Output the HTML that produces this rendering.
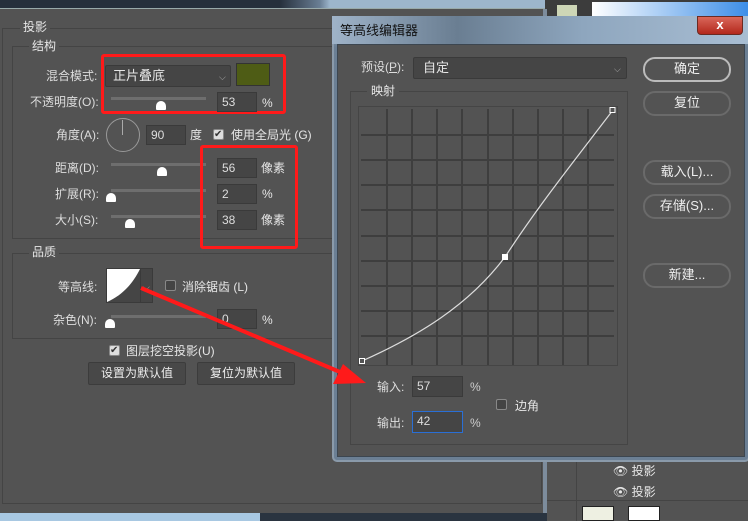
<!DOCTYPE html>
<html><head><meta charset="utf-8"><style>
*{margin:0;padding:0;box-sizing:border-box}
body{width:748px;height:521px;overflow:hidden;background:#535353;position:relative;font-family:"Liberation Sans","Noto Sans CJK SC",sans-serif;font-size:12px;color:#e6e6e6}
.a{position:absolute}
.t{position:absolute;white-space:nowrap;line-height:14px}
.inp{position:absolute;background:#454545;border:1px solid #3a3a3a;color:#ddd;padding-left:4px;line-height:18px;font-size:12px}
.trk{position:absolute;height:3px;background:#6e6e6e}
.th{position:absolute;width:10px;height:9px;background:#fff;border-radius:5px 5px 1px 1px}
.grp{position:absolute;border:1px solid #444}
.btn{position:absolute;border:2px solid #6a6a6a;border-radius:12px;text-align:center;color:#eee;font-size:13px;line-height:20px}
.sbtn{position:absolute;background:#484848;border:1px solid #3c3c3c;border-radius:2px;text-align:center;line-height:20px;color:#eee}
.cb{position:absolute;width:11px;height:11px;border:1px solid #888;border-radius:2px;background:#444}
.red{position:absolute;border:3px solid #ff1a1a;border-radius:3px}
</style></head><body>
<div class="a" style="left:0;top:0;width:748px;height:8px;background:linear-gradient(90deg,#26303c 0,#26303c 280px,#6a7f95 320px,#9db6cc 330px)"></div>
<div class="a" style="left:0;top:8px;width:748px;height:1px;background:#9aa"></div>
<div class="a" style="left:545px;top:0;width:203px;height:16px;background:#3c3c3c"></div>
<div class="a" style="left:557px;top:5px;width:20px;height:11px;background:#cdd6b6"></div>
<div class="a" style="left:592px;top:2px;width:156px;height:14px;background:linear-gradient(90deg,#fff,#3d8ee8)"></div>
<div class="a" style="left:543px;top:9px;width:4px;height:505px;background:#7d8c9c"></div>
<div class="a" style="left:0;top:513px;width:260px;height:8px;background:#a8c8e2"></div>
<div class="a" style="left:260px;top:513px;width:290px;height:8px;background:#2a3440"></div>

<div class="grp" style="left:2px;top:28px;width:540px;height:476px"></div>
<div class="t" style="left:20px;top:20px;background:#535353;padding:0 3px">投影</div>
<div class="grp" style="left:12px;top:46px;width:530px;height:193px"></div>
<div class="t" style="left:29px;top:39px;background:#535353;padding:0 3px">结构</div>

<div class="t" style="left:46px;top:69px;color:#ddd">混合模式:</div>
<div class="a" style="left:105px;top:65px;width:126px;height:22px;background:#454545;border:1px solid #3a3a3a;border-radius:2px"></div>
<div class="t" style="left:113px;top:69px;font-size:13px">正片叠底</div>
<div class="t" style="left:219px;top:70px;color:#aaa;font-size:9px">⌵</div>
<div class="a" style="left:236px;top:63px;width:34px;height:23px;background:#4e5c15;border:1px solid #333"></div>
<div class="red" style="left:101px;top:54px;width:185px;height:60px"></div>

<div class="t" style="left:30px;top:95px;color:#ddd">不透明度(O):</div>
<div class="trk" style="left:111px;top:97px;width:95px"></div><div class="th" style="left:156px;top:101px"></div>
<div class="inp" style="left:217px;top:92px;width:40px;height:20px">53</div><div class="t" style="left:262px;top:96px">%</div>

<div class="t" style="left:56px;top:128px;color:#ddd">角度(A):</div>
<div class="a" style="left:106px;top:118px;width:34px;height:34px;border:1px solid #999;border-radius:50%"></div>
<div class="a" style="left:122px;top:120px;width:1px;height:15px;background:#aaa"></div>
<div class="inp" style="left:146px;top:125px;width:40px;height:20px">90</div><div class="t" style="left:190px;top:128px">度</div>
<div class="cb" style="left:213px;top:129px;background:#ddd"></div><div class="t" style="left:214px;top:128px;color:#333;font-size:10px">✔</div>
<div class="t" style="left:231px;top:128px">使用全局光 (G)</div>

<div class="t" style="left:55px;top:161px;color:#ddd">距离(D):</div>
<div class="trk" style="left:111px;top:163px;width:95px"></div><div class="th" style="left:157px;top:167px"></div>
<div class="inp" style="left:217px;top:158px;width:40px;height:20px">56</div><div class="t" style="left:261px;top:161px">像素</div>
<div class="t" style="left:55px;top:187px;color:#ddd">扩展(R):</div>
<div class="trk" style="left:111px;top:189px;width:95px"></div><div class="th" style="left:106px;top:193px"></div>
<div class="inp" style="left:217px;top:184px;width:40px;height:20px">2</div><div class="t" style="left:262px;top:187px">%</div>
<div class="t" style="left:55px;top:213px;color:#ddd">大小(S):</div>
<div class="trk" style="left:111px;top:215px;width:95px"></div><div class="th" style="left:125px;top:219px"></div>
<div class="inp" style="left:217px;top:210px;width:40px;height:20px">38</div><div class="t" style="left:261px;top:213px">像素</div>
<div class="red" style="left:200px;top:145px;width:98px;height:104px"></div>

<div class="grp" style="left:12px;top:253px;width:530px;height:86px"></div>
<div class="t" style="left:29px;top:245px;background:#535353;padding:0 3px">品质</div>
<div class="t" style="left:58px;top:280px;color:#ddd">等高线:</div>
<div class="a" style="left:106px;top:268px;width:47px;height:35px;border:1px solid #3a3a3a;background:#454545"></div>
<svg class="a" style="left:107px;top:269px" width="33" height="33"><path d="M0 0H33C26 14 16 26 0 33Z" fill="#fff"/></svg>
<div class="a" style="left:140px;top:269px;width:1px;height:33px;background:#3a3a3a"></div>
<div class="t" style="left:143px;top:280px;color:#aaa;font-size:9px">⌵</div>
<div class="cb" style="left:165px;top:280px"></div>
<div class="t" style="left:182px;top:280px">消除锯齿 (L)</div>
<div class="t" style="left:53px;top:313px;color:#ddd">杂色(N):</div>
<div class="trk" style="left:111px;top:315px;width:95px"></div><div class="th" style="left:105px;top:319px"></div>
<div class="inp" style="left:217px;top:309px;width:40px;height:20px">0</div><div class="t" style="left:262px;top:313px">%</div>
<div class="cb" style="left:109px;top:345px;background:#ddd"></div><div class="t" style="left:110px;top:344px;color:#333;font-size:10px">✔</div>
<div class="t" style="left:126px;top:344px">图层挖空投影(U)</div>
<div class="sbtn" style="left:88px;top:362px;width:98px;height:23px">设置为默认值</div>
<div class="sbtn" style="left:197px;top:362px;width:98px;height:23px">复位为默认值</div>

<div class="a" style="left:547px;top:462px;width:201px;height:59px;background:#535353"></div>
<div class="a" style="left:576px;top:462px;width:1px;height:59px;background:#444"></div>
<div class="a" style="left:547px;top:500px;width:201px;height:1px;background:#444"></div>
<div class="t" style="left:613px;top:464px">👁︎ 投影</div>
<div class="t" style="left:613px;top:485px">👁︎ 投影</div>
<div class="a" style="left:582px;top:506px;width:32px;height:15px;background:#eef0e2;border:1px solid #222"></div>
<div class="a" style="left:628px;top:506px;width:32px;height:15px;background:#fff;border:1px solid #222"></div>

<div class="a" style="left:332px;top:16px;width:418px;height:446px;border:2px solid #8a9aaa;border-radius:5px;background:linear-gradient(180deg,#8aa0b8 0,#6b7f94 30px);"></div>
<div class="a" style="left:332px;top:16px;width:418px;height:28px;background:linear-gradient(90deg,#9fb3c8,#6a7e92 30%,#8ea6be 60%,#a9bed3)"></div>
<div class="t" style="left:340px;top:24px;color:#111;font-size:13px">等高线编辑器</div>
<div class="a" style="left:697px;top:16px;width:46px;height:19px;background:linear-gradient(#d9675a,#b3281c);border:1px solid #6b2a22;border-radius:0 0 4px 4px;color:#fff;text-align:center;font-weight:bold;font-size:13px;line-height:16px">x</div>
<div class="a" style="left:337px;top:44px;width:408px;height:413px;background:#535353;border:1px solid #3c4650"></div>

<div class="t" style="left:361px;top:60px;color:#ddd">预设(<u>P</u>):</div>
<div class="a" style="left:413px;top:57px;width:214px;height:22px;background:#454545;border:1px solid #3a3a3a;border-radius:2px"></div>
<div class="t" style="left:423px;top:61px;font-size:13px">自定</div>
<div class="t" style="left:614px;top:62px;color:#aaa;font-size:9px">⌵</div>
<div class="btn" style="left:643px;top:57px;width:88px;height:25px;border-color:#bbb">确定</div>
<div class="btn" style="left:643px;top:91px;width:88px;height:25px">复位</div>
<div class="btn" style="left:643px;top:160px;width:88px;height:25px">载入(L)...</div>
<div class="btn" style="left:643px;top:194px;width:88px;height:25px">存储(S)...</div>
<div class="btn" style="left:643px;top:263px;width:88px;height:25px">新建...</div>

<div class="grp" style="left:350px;top:91px;width:278px;height:354px;border-color:#454545"></div>
<div class="t" style="left:367px;top:84px;background:#535353;padding:0 4px">映射</div>
<svg class="a" style="left:358px;top:106px" width="261" height="261">
<rect x="0.5" y="0.5" width="259" height="259" fill="#535353" stroke="#454545"/>
<g stroke="#3e3e3e" stroke-width="2">
<path d="M29 3V259M54 3V259M79 3V259M104 3V259M130 3V259M155 3V259M180 3V259M205 3V259M230 3V259"/>
<path d="M3 29H256M3 54H256M3 79H256M3 104H256M3 130H256M3 155H256M3 180H256M3 205H256M3 230H256"/>
</g>
<path d="M4 255C60 230 110 200 147 151C180 100 220 50 255 4" fill="none" stroke="#ddd" stroke-width="1.2"/>
<rect x="252" y="1.5" width="5" height="5" fill="#535353" stroke="#fff"/>
<rect x="144" y="148" width="6" height="6" fill="#fff"/>
<rect x="1.5" y="252.5" width="5" height="5" fill="#535353" stroke="#fff"/>
</svg>
<div class="t" style="left:377px;top:380px;color:#ddd">输入:</div>
<div class="inp" style="left:412px;top:376px;width:51px;height:21px">57</div><div class="t" style="left:470px;top:380px;color:#ccc">%</div>
<div class="cb" style="left:496px;top:399px"></div><div class="t" style="left:515px;top:399px">边角</div>
<div class="t" style="left:377px;top:416px;color:#ddd">输出:</div>
<div class="inp" style="left:412px;top:411px;width:51px;height:22px;border-color:#2a6fd6">42</div><div class="t" style="left:470px;top:416px;color:#ccc">%</div>

<svg class="a" style="left:0;top:0" width="748" height="521">
<line x1="141" y1="288" x2="340" y2="372" stroke="#ff1a1a" stroke-width="4"/>
<polygon points="366,383 333,384 343,364" fill="#ff1a1a"/>
</svg>
</body></html>
